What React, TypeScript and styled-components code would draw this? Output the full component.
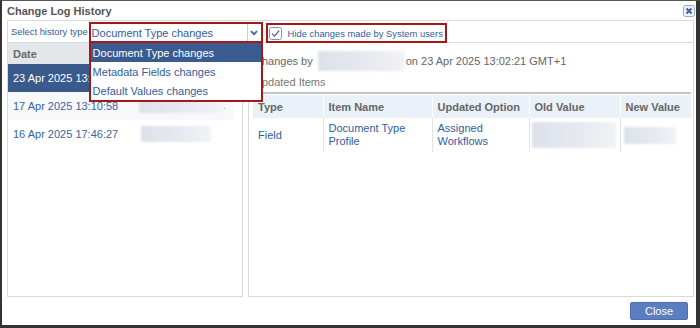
import React from "react";
import styled, { createGlobalStyle } from "styled-components";

const GlobalStyle = createGlobalStyle`
  html, body { margin: 0; padding: 0; background: #fff; }
  body { font-family: "Liberation Sans", Arial, sans-serif; }
  * { box-sizing: border-box; }
`;

const BLUE = "#2f5d9e";
const RED = "#a31818";
const LINE = "#dadada";

const Dialog = styled.div`
  width: 700px;
  height: 328px;
  background: #fff;
  border-top: 1px solid #555;
  border-left: 2px solid #333;
  border-right: 4px solid #333;
  border-bottom: 3px solid #333;
  display: flex;
  flex-direction: column;
`;

const TitleBar = styled.div`
  height: 19px;
  flex: none;
  display: flex;
  align-items: center;
  justify-content: space-between;
  padding: 0 1px 0 5px;
`;

const Title = styled.div`
  font-size: 11px;
  font-weight: bold;
  color: #555;
`;

const CloseIcon = styled.svg`
  display: block;
  width: 12px;
  height: 12px;
`;

const Main = styled.div`
  flex: 1;
  display: flex;
  flex-direction: column;
  padding: 0 2px 0 5px;
  min-height: 0;
`;

const Toolbar = styled.div`
  height: 23px;
  flex: none;
  border: 1px solid ${LINE};
  display: flex;
  align-items: flex-end;
  padding: 0 0 0 3px;
  position: relative;
  z-index: 2;
`;

const ToolLabel = styled.span`
  font-size: 9.4px;
  color: ${BLUE};
  align-self: center;
  margin-right: 1px;
`;

const SelectWrap = styled.div`
  position: relative;
  width: 174px;
  height: 21px;
  margin-bottom: -1px;
`;

const SelectBox = styled.div`
  height: 100%;
  border: 2px solid ${RED};
  background: #fff;
  display: flex;
  align-items: center;
  padding-left: 1px;
  font-size: 11px;
  color: ${BLUE};
`;

const SelectText = styled.span`
  flex: 1;
`;

const Arrow = styled.span`
  width: 14px;
  height: 100%;
  border-left: 1px solid #cfcfcf;
  display: flex;
  align-items: center;
  justify-content: center;
`;

const Menu = styled.div`
  position: absolute;
  left: 0;
  top: calc(100% - 2px);
  width: 100%;
  border: 2px solid ${RED};
  background: #fff;
  display: flex;
  flex-direction: column;
`;

const MenuItem = styled.div<{ $active?: boolean }>`
  height: 19px;
  display: flex;
  align-items: center;
  padding-left: 2px;
  font-size: 11px;
  color: ${(p) => (p.$active ? "#fff" : BLUE)};
  background: ${(p) => (p.$active ? "#3a5b8f" : "#fff")};
`;

const CheckGroup = styled.label`
  margin-left: 3px;
  height: 20px;
  margin-bottom: -1px;
  border: 2px solid ${RED};
  display: flex;
  align-items: center;
  gap: 6px;
  padding: 0 2px 0 1px;
  font-size: 9.4px;
  color: ${BLUE};
`;

const Panes = styled.div`
  flex: 1;
  display: flex;
  gap: 5px;
  min-height: 0;
`;

const LeftPane = styled.div`
  width: 236px;
  flex: none;
  border: 1px solid ${LINE};
  border-top: none;
  display: flex;
  flex-direction: column;
`;

const ListHeader = styled.div`
  height: 21px;
  background: #e4e7ea;
  display: flex;
  align-items: center;
  padding-left: 5px;
  font-size: 11px;
  font-weight: bold;
  color: #6a6a6a;
`;

const DateRow = styled.div<{ $selected?: boolean; $shaded?: boolean }>`
  height: 28px;
  margin-right: 8px;
  display: grid;
  grid-template-columns: 126px auto 1fr;
  align-items: center;
  padding-left: 5px;
  font-size: 11px;
  color: ${(p) => (p.$selected ? "#fff" : "#3a64a0")};
  background: ${(p) =>
    p.$selected ? "#3a5a8c" : p.$shaded ? "#f7f8fa" : "transparent"};
`;

const Blur = styled.span<{ $w: number; $h: number; $ml?: number }>`
  display: block;
  width: ${(p) => p.$w}px;
  height: ${(p) => p.$h}px;
  margin-left: ${(p) => p.$ml ?? 0}px;
  background: linear-gradient(90deg, #dde2ea 0%, #e6e9ef 55%, #f1f3f6 100%);
  filter: blur(1px);
`;

const Dot = styled.span`
  font-size: 9px;
  color: #888;
  margin-left: 2px;
`;

const RightPane = styled.div`
  flex: 1;
  border: 1px solid ${LINE};
  border-top: none;
  padding: 0 2px 0 0;
  display: flex;
  flex-direction: column;
`;

const InfoRow = styled.div`
  margin-top: 8px;
  height: 20px;
  display: flex;
  align-items: center;
  padding-left: 5px;
  font-size: 11px;
  color: #666;
  gap: 1px;
`;

const SectionTitle = styled.div`
  height: 23px;
  display: flex;
  align-items: center;
  padding-left: 5px;
  font-size: 11px;
  color: #777;
  border-bottom: 2px solid #c4c4c4;
`;

const Table = styled.table`
  margin: 1px 0 0 4px;
  width: 438px;
  border-collapse: collapse;
  table-layout: fixed;
`;

const Th = styled.th<{ $w: number }>`
  width: ${(p) => p.$w}px;
  height: 23px;
  padding: 0 5px;
  background: #eaf1f8;
  color: #666;
  font-size: 11px;
  font-weight: bold;
  text-align: left;
  border-left: 1px solid #fff;
  &:first-child { border-left: none; }
`;

const Td = styled.td`
  padding: 4px 5px;
  font-size: 11px;
  line-height: 13px;
  color: ${BLUE};
  vertical-align: middle;
  border-left: 1px solid #e4e4e4;
  &:first-child { border-left: none; }
`;

const Footer = styled.div`
  height: 28px;
  flex: none;
  display: flex;
  align-items: center;
  justify-content: flex-end;
  padding-right: 8px;
`;

const CloseButton = styled.button`
  width: 58px;
  height: 18px;
  border: 1px solid #4e70b2;
  border-radius: 2px;
  background: #5b7ec0;
  color: #fff;
  font-family: "Liberation Sans", Arial, sans-serif;
  font-size: 11px;
  padding: 0;
`;

export default function App() {
  return (
    <>
      <GlobalStyle />
      <Dialog>
        <TitleBar>
          <Title>Change Log History</Title>
          <CloseIcon viewBox="0 0 12 12">
            <rect x="0.5" y="0.5" width="11" height="11" rx="2" fill="#eef2f8" stroke="#9aa9c6" />
            <path d="M3.5 3.5 L8.5 8.5 M8.5 3.5 L3.5 8.5" stroke="#3f60a8" strokeWidth="2" />
          </CloseIcon>
        </TitleBar>
        <Main>
          <Toolbar>
            <ToolLabel>Select history type</ToolLabel>
            <SelectWrap>
              <SelectBox>
                <SelectText>Document Type changes</SelectText>
                <Arrow>
                  <svg width="8" height="6" viewBox="0 0 8 6">
                    <path d="M1 1.2 L4 4.2 L7 1.2" fill="none" stroke="#3a64a0" strokeWidth="1.7" />
                  </svg>
                </Arrow>
              </SelectBox>
              <Menu>
                <MenuItem $active>Document Type changes</MenuItem>
                <MenuItem>Metadata Fields changes</MenuItem>
                <MenuItem>Default Values changes</MenuItem>
              </Menu>
            </SelectWrap>
            <CheckGroup>
              <svg width="13" height="13" viewBox="0 0 13 13">
                <rect x="0.5" y="0.5" width="12" height="12" rx="2" fill="#fff" stroke="#8193b6" />
                <path d="M3 6.6 L5.5 9.1 L10.2 3.6" fill="none" stroke="#4b5f86" strokeWidth="1.3" />
              </svg>
              Hide changes made by System users
            </CheckGroup>
          </Toolbar>
          <Panes>
            <LeftPane>
              <ListHeader>Date</ListHeader>
              <DateRow $selected>
                <span>23 Apr 2025 13:02:21</span>
                <Blur $w={80} $h={14} />
              </DateRow>
              <DateRow $shaded>
                <span>17 Apr 2025 13:10:58</span>
                <Blur $w={82} $h={13} />
                <Dot>.</Dot>
              </DateRow>
              <DateRow>
                <span>16 Apr 2025 17:46:27</span>
                <Blur $w={70} $h={16} $ml={2} />
              </DateRow>
            </LeftPane>
            <RightPane>
              <InfoRow>
                <span>Changes by</span>
                <Blur $w={87} $h={20} $ml={4} />
                <span>on 23 Apr 2025 13:02:21 GMT+1</span>
              </InfoRow>
              <SectionTitle>Updated Items</SectionTitle>
              <Table>
                <thead>
                  <tr>
                    <Th $w={70}>Type</Th>
                    <Th $w={109}>Item Name</Th>
                    <Th $w={97}>Updated Option</Th>
                    <Th $w={91}>Old Value</Th>
                    <Th $w={71}>New Value</Th>
                  </tr>
                </thead>
                <tbody>
                  <tr>
                    <Td>Field</Td>
                    <Td>Document Type Profile</Td>
                    <Td>Assigned Workflows</Td>
                    <Td>
                      <Blur $w={84} $h={26} $ml={-3} />
                    </Td>
                    <Td>
                      <Blur $w={52} $h={17} $ml={-2} />
                    </Td>
                  </tr>
                </tbody>
              </Table>
            </RightPane>
          </Panes>
        </Main>
        <Footer>
          <CloseButton>Close</CloseButton>
        </Footer>
      </Dialog>
    </>
  );
}
